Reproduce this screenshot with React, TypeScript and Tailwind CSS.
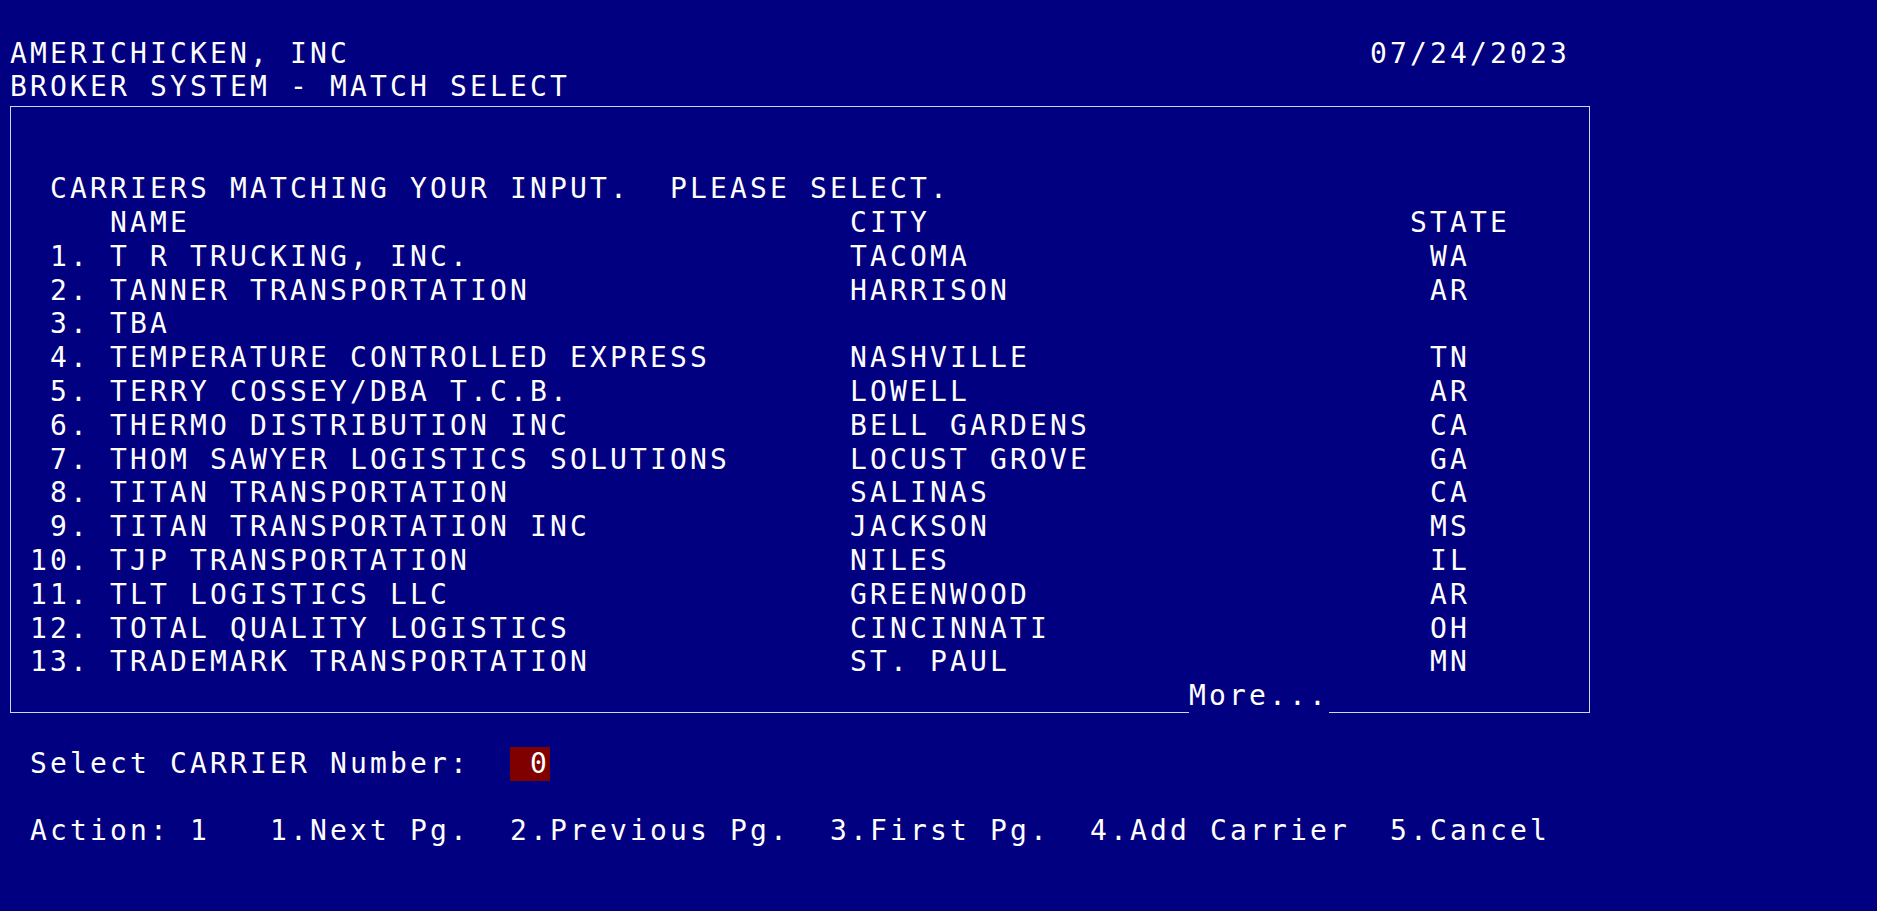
import React from "react";

const rows: [string, string, string, string][] = [
  ["1.", "T R TRUCKING, INC.", "TACOMA", "WA"],
  ["2.", "TANNER TRANSPORTATION", "HARRISON", "AR"],
  ["3.", "TBA", "", ""],
  ["4.", "TEMPERATURE CONTROLLED EXPRESS", "NASHVILLE", "TN"],
  ["5.", "TERRY COSSEY/DBA T.C.B.", "LOWELL", "AR"],
  ["6.", "THERMO DISTRIBUTION INC", "BELL GARDENS", "CA"],
  ["7.", "THOM SAWYER LOGISTICS SOLUTIONS", "LOCUST GROVE", "GA"],
  ["8.", "TITAN TRANSPORTATION", "SALINAS", "CA"],
  ["9.", "TITAN TRANSPORTATION INC", "JACKSON", "MS"],
  ["10.", "TJP TRANSPORTATION", "NILES", "IL"],
  ["11.", "TLT LOGISTICS LLC", "GREENWOOD", "AR"],
  ["12.", "TOTAL QUALITY LOGISTICS", "CINCINNATI", "OH"],
  ["13.", "TRADEMARK TRANSPORTATION", "ST. PAUL", "MN"],
];

export default function App() {
  return (
    <div className="min-h-[911px] w-full bg-[#000080] text-white font-['DejaVu_Sans_Mono',monospace] text-[28px] tracking-[3.143px] leading-[33.8px] whitespace-pre pt-[36.7px] pl-[10px] antialiased">
      <div className="grid grid-cols-[1360px_auto]">
        <span>AMERICHICKEN, INC</span>
        <span>07/24/2023</span>
      </div>
      <div>BROKER SYSTEM - MATCH SELECT</div>

      <div className="mt-[2px] w-[1580px] border-x border-t border-[#d4d4f2] pt-[64.9px]">
        <div className="pl-[39px]">CARRIERS MATCHING YOUR INPUT.  PLEASE SELECT.</div>
        <div className="grid grid-cols-[99px_740px_560px_auto]">
          <span />
          <span>NAME</span>
          <span>CITY</span>
          <span>STATE</span>
        </div>
        {rows.map(([n, name, city, st]) => (
          <div key={n} className="grid grid-cols-[79px_20px_740px_580px_auto]">
            <span className="text-right">{n}</span>
            <span />
            <span>{name}</span>
            <span>{city}</span>
            <span>{st}</span>
          </div>
        ))}
        <div className="flex h-[33.8px]">
          <div className="w-[1178px] border-b border-[#d4d4f2]" />
          <span>More...</span>
          <div className="flex-1 border-b border-[#d4d4f2]" />
        </div>
      </div>

      <div className="mt-[33.8px] pl-[20px]">
        <span>Select CARRIER Number:  </span>
        <span className="inline-block h-[33.8px] bg-[#800000]"> 0</span>
      </div>

      <div className="mt-[33.8px] pl-[20px]">
        Action: 1   1.Next Pg.  2.Previous Pg.  3.First Pg.  4.Add Carrier  5.Cancel
      </div>
    </div>
  );
}
